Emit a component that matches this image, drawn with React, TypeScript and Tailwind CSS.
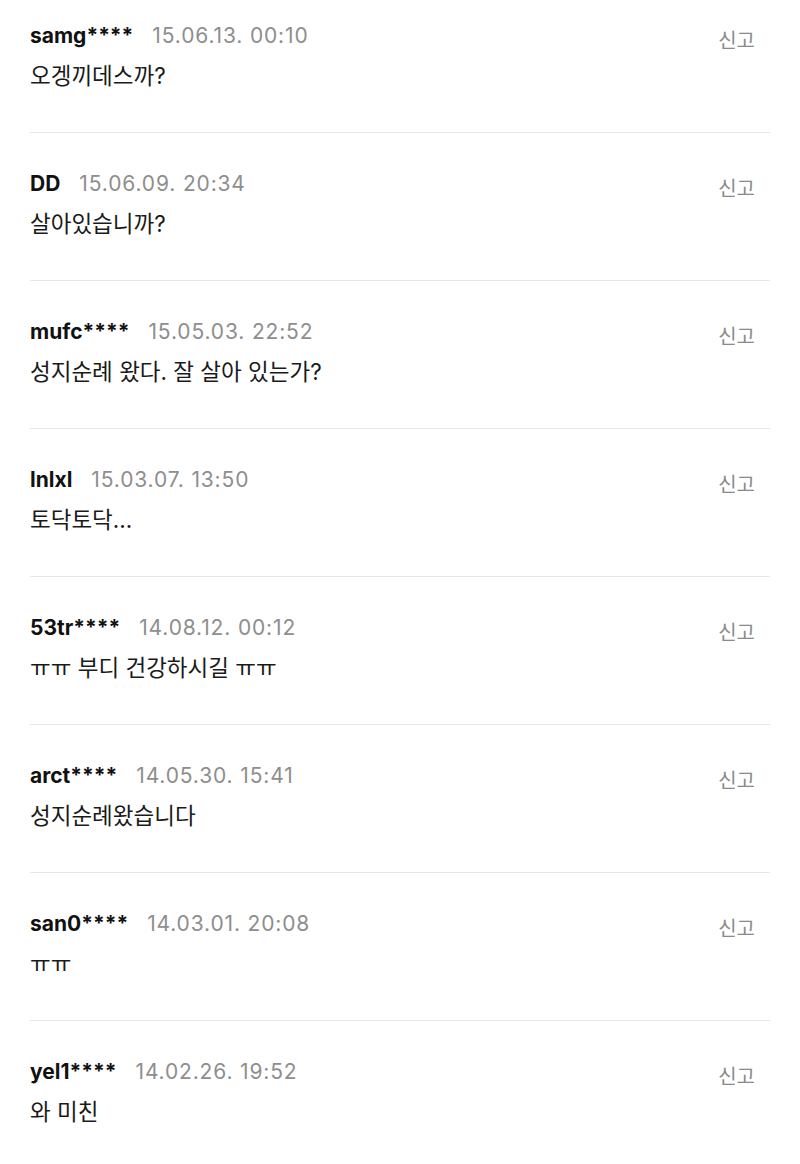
import React from "react";

type Comment = {
  user: string;
  date: string;
  text: string;
};

const comments: Comment[] = [
  { user: "samg****", date: "15.06.13. 00:10", text: "오겡끼데스까?" },
  { user: "DD", date: "15.06.09. 20:34", text: "살아있습니까?" },
  { user: "mufc****", date: "15.05.03. 22:52", text: "성지순례 왔다. 잘 살아 있는가?" },
  { user: "lnlxl", date: "15.03.07. 13:50", text: "토닥토닥..." },
  { user: "53tr****", date: "14.08.12. 00:12", text: "ㅠㅠ 부디 건강하시길 ㅠㅠ" },
  { user: "arct****", date: "14.05.30. 15:41", text: "성지순례왔습니다" },
  { user: "san0****", date: "14.03.01. 20:08", text: "ㅠㅠ" },
  { user: "yel1****", date: "14.02.26. 19:52", text: "와 미친" },
];

export default function App() {
  return (
    <div className="w-[800px] min-h-[1164px] bg-white font-['Inter','Noto_Sans_CJK_KR',sans-serif] overflow-hidden">
      <ul className="px-[30px]">
        {comments.map((c, i) => (
          <li
            key={i}
            className={`flex justify-between border-b border-[#e6e6e6] pb-[42px] ${
              i === 0 ? "pt-[22px]" : "pt-[37px]"
            }`}
          >
            <div className="flex flex-col gap-[12px]">
              <div className="flex items-center gap-[19px] h-[28px] text-[21px] leading-[28px]">
                <span className="font-bold text-[#111]">{c.user}</span>
                <span className="text-[#8e8e8e] tracking-[0.85px]">{c.date}</span>
              </div>
              <p className="h-[28px] text-[22.5px] leading-[28px] text-[#1a1a1a]">
                {c.text}
              </p>
            </div>
            <button className="mr-[15px] mt-[5px] h-[28px] text-[20px] leading-[28px] text-[#8a8a8a]">
              신고
            </button>
          </li>
        ))}
      </ul>
    </div>
  );
}
